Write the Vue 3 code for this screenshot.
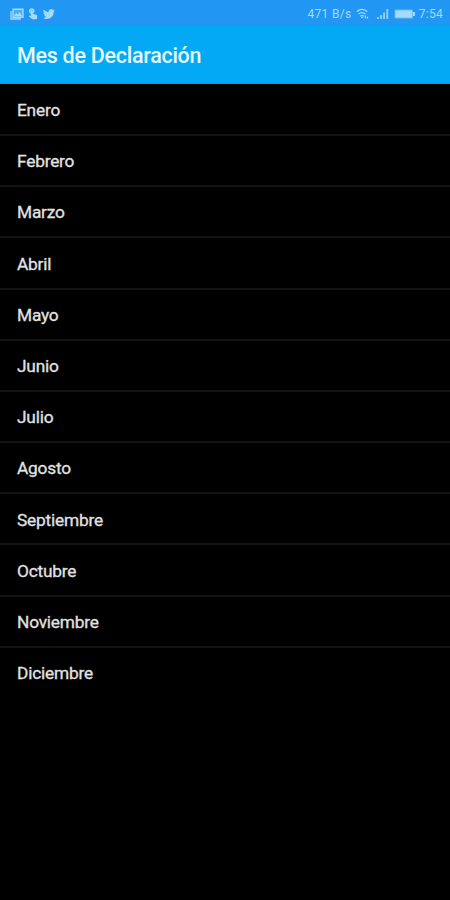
<script setup>
const months = ['Enero', 'Febrero', 'Marzo', 'Abril', 'Mayo', 'Junio', 'Julio', 'Agosto', 'Septiembre', 'Octubre', 'Noviembre', 'Diciembre']
</script>

<template>
  <div class="screen">
    <div class="status">
      <div class="notifications">
        <svg class="photo" width="14" height="12" viewBox="0 0 14 12">
          <path d="M3 1.2h10v8H3z" fill="currentColor" fill-opacity=".35" stroke="currentColor" stroke-width="1.4" />
          <path d="M1 3v8h10" fill="none" stroke="currentColor" stroke-width="1.3" />
          <path d="M4 8l2.2-3 1.6 1.8L9.6 4 12 8z" fill="currentColor" />
        </svg>
        <svg class="touch" width="10" height="12" viewBox="0 0 10 12">
          <circle cx="3.7" cy="3" r="2.2" fill="currentColor" fill-opacity=".5" stroke="currentColor" stroke-width="1.2" />
          <path d="M2.8 2.8c0-1.2 1.9-1.2 1.9 0v3l3.5 1c.9.3 1.1.8 1 1.6l-.5 2.8H4.4L.8 8.4l.7-.8 1.3.4z" fill="currentColor" />
        </svg>
        <svg class="bird" width="12" height="12" viewBox="0 0 24 24" preserveAspectRatio="none">
          <path fill="currentColor" d="M23.6 4.6c-.9.4-1.8.6-2.8.8 1-.6 1.8-1.6 2.1-2.7-.9.6-2 1-3.1 1.200a4.900 4.900 0 0 0-8.400 4.500C7.400 8.200 3.700 6.200 1.300 3.200c-1.300 2.200-.7 5.100 1.500 6.600-.8 0-1.600-.2-2.200-.6 0 2.300 1.600 4.400 3.900 4.900-.7.2-1.500.2-2.200.1.600 2 2.400 3.400 4.600 3.400A9.900 9.900 0 0 1 0 19.600 14 14 0 0 0 21.500 7.200c.8-.7 1.600-1.600 2.100-2.600z" />
        </svg>
      </div>
      <div class="system">
        <span class="speed">471 B/s</span>
        <svg class="wifi" width="14" height="12" viewBox="0 0 14 12">
          <g fill="none" stroke="currentColor" stroke-width="1.2">
            <path d="M.8 3.700Q6-.9 11.200 3.700" />
            <path d="M2.600 6Q6 3.100 9.400 6" />
            <path d="M4.200 8.200Q6 6.800 7.800 8.200" />
          </g>
          <path d="M4.800 9L6 8.500l1.200.5L6 10.500zM8.700 7.500h1.200v3H8.700zM10.900 8.500h1.200v2h-1.200z" fill="currentColor" />
        </svg>
        <svg class="signal" width="12" height="10" viewBox="0 0 12 10" fill="currentColor">
          <path d="M0 8h1.800v2H0zM3 6h1.900v4H3zM6.100 3.500H8V10H6.100zM9.300 0h1.900v10H9.300z" opacity=".85" />
        </svg>
        <svg class="battery" width="22" height="10" viewBox="0 0 22 10">
          <rect x=".5" y=".5" width="18.500" height="9" rx="1" fill="currentColor" opacity=".55" />
          <path d="M1.500 1.500h16.500v7H1.500zM19 3h2v4h-2z" fill="currentColor" />
        </svg>
        <span class="clock">7:54</span>
      </div>
    </div>
    <header class="bar">
      <h1>Mes de Declaración</h1>
    </header>
    <ul class="months">
      <li v-for="month in months" :key="month">{{ month }}</li>
    </ul>
  </div>
</template>

<style>
body {
  margin: 0;
  background: #000;
}
</style>

<style scoped>
.screen {
  height: 900px;
  overflow: hidden;
  background: #000;
  color: #e2e2e2;
  font-family: Roboto, sans-serif;
}
.status {
  display: flex;
  justify-content: space-between;
  align-items: center;
  box-sizing: border-box;
  height: 26px;
  padding: 1px 7px 0 10px;
  background: #2196f3;
  color: #a5dbfa;
  font-size: 12px;
}
.notifications,
.system {
  display: flex;
  align-items: center;
}
.touch {
  margin-left: 4px;
}
.bird {
  margin-left: 5px;
}
.speed {
  letter-spacing: 0.35px;
}
.wifi {
  margin-left: 4px;
}
.signal {
  margin-left: 7px;
}
.battery {
  margin-left: 5px;
}
.clock {
  margin-left: 3px;
  letter-spacing: 0.3px;
}
.bar {
  display: flex;
  align-items: center;
  box-sizing: border-box;
  height: 58px;
  padding: 2px 17px 0;
  background: #03a9f4;
  border-bottom: 1px solid #1592d0;
}
h1 {
  margin: 0;
  color: #e6f7fe;
  font-size: 21.5px;
  font-weight: 500;
  letter-spacing: -0.28px;
}
.months {
  margin: 0;
  padding: 0.8px 0 0;
  list-style: none;
}
li {
  display: flex;
  align-items: center;
  box-sizing: border-box;
  height: 51.2px;
  padding: 1.4px 17px 0;
  border-bottom: 2px solid #131313;
  font-size: 17.3px;
  letter-spacing: -0.2px;
  -webkit-text-stroke: 0.3px #e2e2e2;
}
li:last-child {
  border-bottom-color: transparent;
}
</style>
